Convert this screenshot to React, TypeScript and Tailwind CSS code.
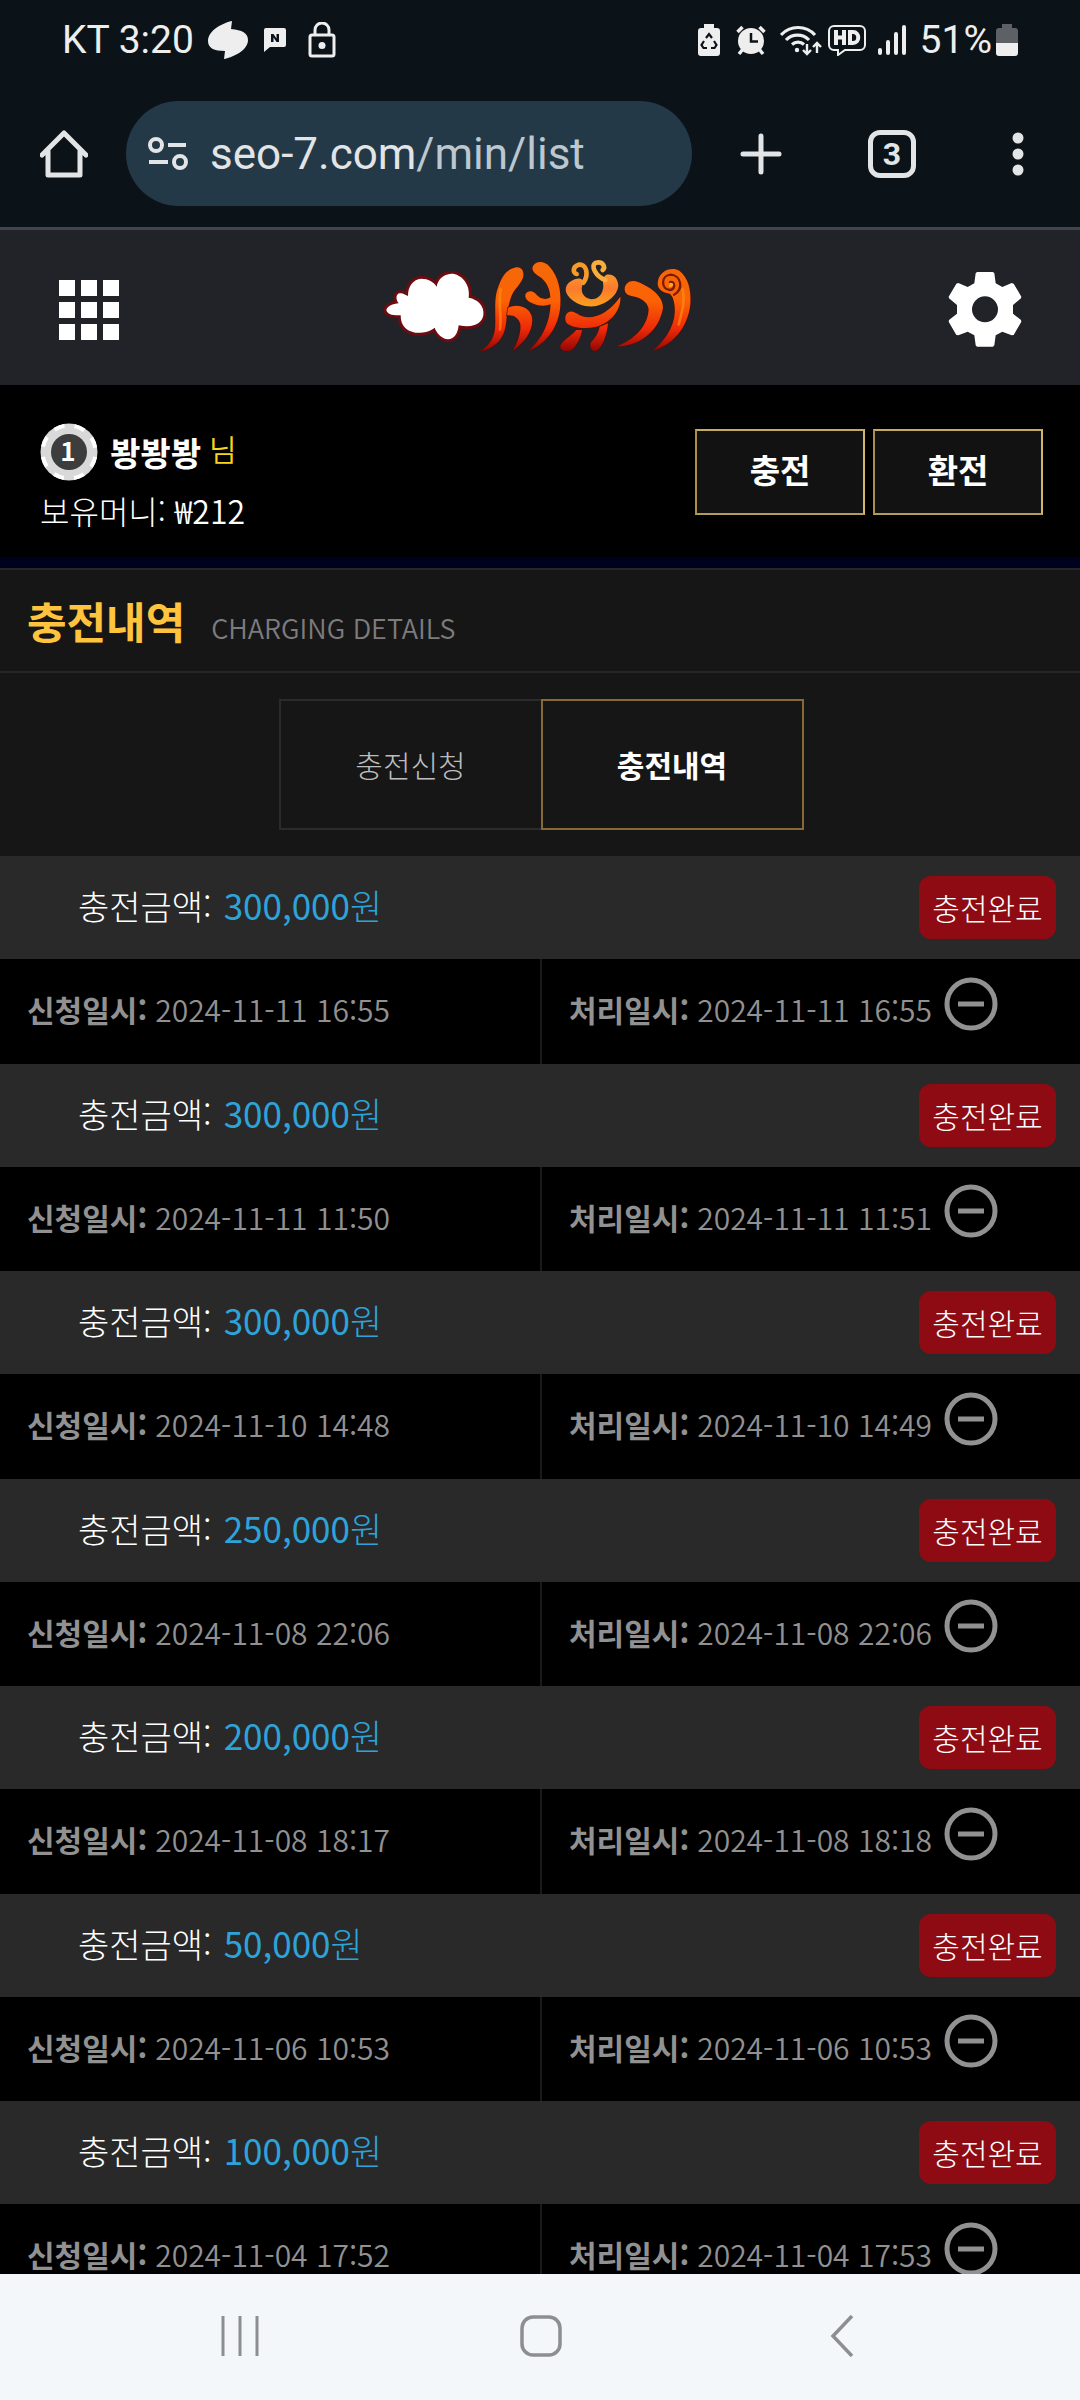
import React from "react";

const HISTORY = [
  { amount: "300,000", requested: "2024-11-11 16:55", processed: "2024-11-11 16:55" },
  { amount: "300,000", requested: "2024-11-11 11:50", processed: "2024-11-11 11:51" },
  { amount: "300,000", requested: "2024-11-10 14:48", processed: "2024-11-10 14:49" },
  { amount: "250,000", requested: "2024-11-08 22:06", processed: "2024-11-08 22:06" },
  { amount: "200,000", requested: "2024-11-08 18:17", processed: "2024-11-08 18:18" },
  { amount: "50,000", requested: "2024-11-06 10:53", processed: "2024-11-06 10:53" },
  { amount: "100,000", requested: "2024-11-04 17:52", processed: "2024-11-04 17:53" },
];

function StatusBar() {
  return (
    <div className="flex h-20 items-center justify-between px-[62px] text-[39px] leading-none text-[#eeeeee]">
      <div className="flex items-center">
        <span>KT 3:20</span>
        <svg className="ml-[14px] h-[38px] w-10" viewBox="0 0 40 38" fill="currentColor">
          <path d="M24 0C11 3 0 11 0 20c0 7 6 10 17 10l-1 8c13-3 24-10 24-19 0-7-6-10-17-11z" />
        </svg>
        <svg className="ml-4 h-6 w-[22px]" viewBox="0 0 22 24">
          <path
            d="M2 0h18a2 2 0 0 1 2 2v15a2 2 0 0 1-2 2H6l-6 5V2a2 2 0 0 1 2-2z"
            fill="currentColor"
          />
          <path d="M7 14V6h2.500l3 4.500V6H15v8h-2.500l-3-4.500V14z" fill="#0b1319" />
        </svg>
        <svg
          className="ml-[22px] h-9 w-7"
          viewBox="0 0 28 36"
          fill="none"
          stroke="currentColor"
          strokeWidth="3">
          <path d="M7 13V8a7 7 0 0 1 14 0v5" />
          <rect x="2" y="13" width="24" height="21" rx="2" />
          <circle cx="14" cy="23.500" r="3.500" fill="currentColor" stroke="none" />
        </svg>
      </div>
      <div className="flex items-center">
        <svg className="h-8 w-[22px]" viewBox="0 0 22 32">
          <path
            d="M6 0h10v4h3a3 3 0 0 1 3 3v22a3 3 0 0 1-3 3H3a3 3 0 0 1-3-3V7a3 3 0 0 1 3-3h3z"
            fill="currentColor"
          />
          <path
            d="M8 14l3-4 3 4m2 3 2.500 4-2 3H13m-4 0H5.500l-2-3L6 17"
            fill="none"
            stroke="#0b1319"
            strokeWidth="2.200"
          />
        </svg>
        <svg className="ml-4 h-8 w-[30px]" viewBox="0 0 30 32">
          <circle cx="15" cy="17" r="13" fill="currentColor" />
          <path
            d="M1.500 8l5-5M28.500 8l-5-5M3 30l4-5M27 30l-4-5"
            stroke="currentColor"
            strokeWidth="3.500"
          />
          <path d="M15 9v8.500h7" fill="none" stroke="#0b1319" strokeWidth="2.500" />
        </svg>
        <svg
          className="ml-[14px] h-8 w-[42px]"
          viewBox="0 0 42 32"
          fill="none"
          stroke="currentColor"
          strokeWidth="3.200">
          <path d="M1 11a23 23 0 0 1 34 0M6 16a16 16 0 0 1 23 0M12 20.500a9 9 0 0 1 12 0" />
          <circle cx="17" cy="26" r="2.200" fill="currentColor" stroke="none" />
          <path d="M27 20v10m-4-4 4 4 4-4M37 29V19m-4 4 4-4 4 4" strokeWidth="2.400" />
        </svg>
        <svg
          className="ml-[6px] h-8 w-[38px]"
          viewBox="0 0 38 32"
          fill="none"
          stroke="currentColor">
          <path
            d="M6 2h26a5 5 0 0 1 5 5v14a5 5 0 0 1-5 5H17l-7 5v-5H6a5 5 0 0 1-5-5V7a5 5 0 0 1 5-5z"
            strokeWidth="2"
          />
          <path d="M8 6v15M16 6v15M8 13.500h8M22 8h3c7 0 7 11 0 11h-3z" strokeWidth="4" />
        </svg>
        <svg className="ml-3 h-8 w-7" viewBox="0 0 28 32" stroke="currentColor" strokeWidth="4" strokeLinecap="round">
          <path d="M2 26v3M10 18v11M18 10v19M26 3v26" />
        </svg>
        <span className="ml-[14px]">51%</span>
        <svg className="ml-1 h-8 w-[22px]" viewBox="0 0 22 32">
          <path
            d="M6 0h10v4h3a3 3 0 0 1 3 3v12H0V7a3 3 0 0 1 3-3h3z"
            fill="#5d6165"
          />
          <path d="M0 19h22v10a3 3 0 0 1-3 3H3a3 3 0 0 1-3-3z" fill="currentColor" />
        </svg>
      </div>
    </div>
  );
}

function BrowserBar() {
  return (
    <div className="flex h-[147px] items-center pr-14 pl-10 text-[#e2e4e6]">
      <button aria-label="홈">
        <svg
          className="h-12 w-12"
          viewBox="0 0 48 48"
          fill="none"
          stroke="currentColor"
          strokeWidth="5"
          strokeLinejoin="round"
          strokeLinecap="round">
          <path d="M2 25 24 3l22 22M8 21v24h32V21" />
        </svg>
      </button>
      <button className="ml-[38px] flex h-[105px] flex-1 items-center rounded-full bg-[#233947] pl-[22px] text-[44px]">
        <svg
          className="h-9 w-10"
          viewBox="0 0 40 36"
          fill="none"
          stroke="currentColor"
          strokeWidth="4">
          <circle cx="8" cy="9" r="6" />
          <path d="M20 9h18M1 26h19" />
          <circle cx="32" cy="26" r="6" />
        </svg>
        <span className="ml-[22px]">
          seo-7.com<span className="text-[#bdc7cf]">/min/list</span>
        </span>
      </button>
      <button aria-label="새 탭" className="ml-12">
        <svg
          className="h-[42px] w-[42px]"
          viewBox="0 0 42 42"
          stroke="currentColor"
          strokeWidth="5"
          strokeLinecap="round">
          <path d="M21 3v36M3 21h36" />
        </svg>
      </button>
      <button
        aria-label="탭 3개"
        className="ml-[86px] flex h-12 w-12 items-center justify-center rounded-xl border-[5px] border-current text-[32px] leading-none font-bold">
        3
      </button>
      <button aria-label="메뉴" className="ml-[96px]">
        <svg className="h-11 w-3" viewBox="0 0 12 44" fill="currentColor">
          <circle cx="6" cy="6" r="5.500" />
          <circle cx="6" cy="22" r="5.500" />
          <circle cx="6" cy="38" r="5.500" />
        </svg>
      </button>
    </div>
  );
}

function Logo() {
  return (
    <svg className="h-[100px] w-80" viewBox="60 90 960 300" role="img" aria-label="서유기">
      <defs>
        <linearGradient id="flame" x1="0" y1="100" x2="0" y2="378" gradientUnits="userSpaceOnUse">
          <stop offset="0" stopColor="#f26a08" />
          <stop offset="0.450" stopColor="#fb6205" />
          <stop offset="0.750" stopColor="#ee2a08" />
          <stop offset="1" stopColor="#8e0505" />
        </linearGradient>
        <linearGradient id="ember" x1="0" y1="100" x2="0" y2="245" gradientUnits="userSpaceOnUse">
          <stop offset="0" stopColor="#ffb52b" />
          <stop offset="0.600" stopColor="#fb7a2c" />
          <stop offset="1" stopColor="#fba21c" />
        </linearGradient>
      </defs>
      <path
        d="M85 252C88 240 105 234 122 232C112 220 114 203 125 202C135 200 143 208 150 210C150 180 165 160 190 158C210 158 228 168 236 182C240 160 255 145 280 143C310 143 338 175 332 215C360 220 380 240 376 268C372 290 350 308 302 298C300 320 290 340 270 340C250 338 235 320 230 305C215 318 190 322 172 320C145 315 128 300 128 268C110 268 88 268 85 252Z"
        fill="#fff"
        stroke="#6b0c10"
        strokeWidth="18"
        strokeLinejoin="round"
        paintOrder="stroke"
      />
      <g fill="url(#flame)" stroke="#4a1210" strokeWidth="4" paintOrder="stroke">
        <path d="M470 125C490 120 500 135 495 155C485 180 465 190 457 220C452 240 448 250 446 270C444 320 430 362 365 377C400 355 412 330 412 290C412 240 410 210 420 185C430 155 445 130 470 125Z" />
        <path d="M450 245C475 232 512 240 521 270C530 310 500 350 465 374C480 345 490 320 487 295C483 275 465 265 447 268Z" />
        <path d="M525 120C535 103 560 105 575 122C600 150 610 190 607 240C602 300 570 350 512 375C555 335 575 290 578 235C560 242 535 240 515 228C503 220 500 212 503 203C512 190 530 195 537 208C548 220 565 222 577 214C577 190 565 165 545 152C525 140 520 130 525 120Z" />
        <path d="M625 265C635 250 650 258 665 268C700 285 750 265 787 212C790 250 760 290 715 302C680 310 640 305 625 290C620 280 622 270 625 265Z" />
        <path d="M672 312C668 335 660 350 650 362C640 378 615 380 607 365C607 345 635 335 655 312Z" />
        <path d="M750 292C748 320 735 365 715 374C700 378 695 360 698 350C712 335 722 320 725 302Z" />
        <path d="M800 190C800 170 820 160 840 168C880 185 915 210 915 245C905 310 850 360 778 361C830 340 870 300 872 250C870 225 840 212 820 210C808 208 800 200 800 190Z" />
        <path d="M900 165C905 135 940 120 965 135C990 155 1000 190 997 235C990 300 950 355 885 374C930 335 955 290 950 240C948 225 945 210 935 203C910 200 895 185 900 165Z" />
      </g>
      <path
        d="M650 160C620 172 615 195 635 215C655 235 685 245 715 240C745 232 778 210 781 180C780 155 765 142 745 146C732 155 735 165 736 180C735 205 720 220 700 220C675 217 666 195 674 175C680 162 668 152 650 160Z"
        fill="url(#ember)"
      />
      <g fill="none" strokeLinecap="round">
        <path d="M676 170C694 145 685 112 662 116C642 122 645 142 656 144" stroke="#f79a2a" strokeWidth="14" />
        <path d="M742 162C715 152 694 118 715 110C734 106 744 122 734 132" stroke="#f9ad3a" strokeWidth="14" />
        <path d="M948 206C978 190 970 148 938 146C908 148 908 190 936 192C955 188 950 164 936 168" stroke="#7c1b05" strokeWidth="7" />
        <path d="M936 180C944 178 944 174 938 174" stroke="#ffa52a" strokeWidth="7" />
        <path d="M428 190C420 230 432 270 426 310M974 190C982 230 970 265 962 295" stroke="#ff9412" strokeWidth="8" opacity="0.600" />
      </g>
    </svg>
  );
}

function SiteHeader() {
  return (
    <header className="flex h-[158px] shrink-0 items-center justify-between border-t-[3px] border-[#42454d] bg-[#222328] pt-1 pr-[58px] pl-[59px] text-white">
      <button aria-label="전체메뉴" className="grid grid-cols-3 gap-[6px]">
        {Array.from({ length: 9 }, (_, i) => (
          <span key={i} className="h-4 w-4 bg-white" />
        ))}
      </button>
      <a href="#home" className="pb-2 pl-2">
        <Logo />
      </a>
      <button aria-label="설정">
        <svg className="h-[75px] w-[74px]" viewBox="-111 -112 222 225" fill="currentColor" fillRule="evenodd">
          <path d="M-24 -112H24L28 -108L32 -78L52 -67L80 -79L86 -77L109 -38L108 -33L84 -13V13L108 32L109 37L86 77L80 78L52 67L32 78L28 108L24 112H-24L-28 108L-32 78L-52 67L-80 78L-86 77L-109 37L-108 32L-84 13V-13L-108 -33L-109 -38L-86 -77L-80 -79L-52 -67L-32 -78L-28 -108ZM0 -39A39 39 0 1 0 0 39A39 39 0 1 0 0 -39Z" />
        </svg>
      </button>
    </header>
  );
}

function LevelChip() {
  return (
    <svg className="h-[58px] w-[58px]" viewBox="0 0 58 58">
      <circle cx="29" cy="29" r="28.500" fill="#d9d9d9" />
      <circle
        cx="29"
        cy="29"
        r="26.500"
        fill="none"
        stroke="#fff"
        strokeWidth="4"
        strokeDasharray="10.400 10.400"
        strokeDashoffset="-5"
      />
      <circle cx="29" cy="29" r="18" fill="#3d3d3d" />
      <text x="28" y="38" fill="#fff" fontSize="26" fontWeight="700" textAnchor="middle">
        1
      </text>
    </svg>
  );
}

function UserPanel() {
  return (
    <section className="flex h-[183px] shrink-0 items-start justify-between border-b-[11px] border-[#00001f] bg-black pr-[37px] pl-10 text-white">
      <div className="pt-[37px]">
        <div className="flex items-center">
          <LevelChip />
          <strong className="ml-3 text-[33px] leading-[60px]">봥봥봥</strong>
          <span className="ml-2 pb-2 text-[30px] leading-none font-[350] text-[#f8d31c]">님</span>
        </div>
        <p className="text-[32px] leading-14 font-light">
          보유머니: <span className="font-[350]">₩212</span>
        </p>
      </div>
      <div className="flex gap-2 pt-11">
        {["충전", "환전"].map((label) => (
          <button
            key={label}
            className="h-[86px] w-[170px] border-2 border-t-[#c4ab62] border-r-[#d0b76c] border-b-[#b39c5a] border-l-[#a8904c] bg-[#121212] pb-1 text-[33px] font-bold">
            {label}
          </button>
        ))}
      </div>
    </section>
  );
}

function Tabs() {
  return (
    <nav className="flex justify-center bg-[#161616] pt-[26px] pb-[26px] pl-[2px]">
      <button className="h-[131px] w-[262px] border-2 border-r-0 border-[#2b2b2b] text-[30px] font-light text-[#bdbdbd]">
        충전신청
      </button>
      <button className="h-[131px] w-[263px] border-2 border-[#856a36] text-[30px] font-bold text-white">
        충전내역
      </button>
    </nav>
  );
}

function HistoryItem({ item }: { item: (typeof HISTORY)[number] }) {
  return (
    <li className="flex flex-col odd:h-[208px] even:h-[207px]">
      <div className="flex h-[103px] items-center justify-between bg-[#292929] pr-6 pl-[78px]">
        <p className="flex items-baseline gap-3 pb-1 text-[34px] font-light text-white">
          충전금액:
          <span className="text-[35px] text-[#2ea3d9]">
            <span className="font-normal">{item.amount}</span>원
          </span>
        </p>
        <span className="flex h-[63px] w-[137px] items-center justify-center rounded-xl bg-[#8f0b14] text-[30px] font-light text-white">
          충전완료
        </span>
      </div>
      <div className="grid flex-1 grid-cols-2 bg-black text-[30px] text-[#919191]">
        <p className="flex items-center gap-2 pb-1 pl-[27px]">
          <b>신청일시:</b>
          <span className="font-[350]">{item.requested}</span>
        </p>
        <p className="flex items-center gap-2 border-l-2 border-[#1a1a1a] pb-1 pl-[27px]">
          <b>처리일시:</b>
          <span className="font-[350]">{item.processed}</span>
          <button aria-label="접기" className="ml-1 pb-3">
            <svg
              className="h-[54px] w-[54px]"
              viewBox="0 0 54 54"
              fill="none"
              stroke="currentColor"
              strokeWidth="5">
              <circle cx="27" cy="27" r="24" />
              <path d="M14 27h26" />
            </svg>
          </button>
        </p>
      </div>
    </li>
  );
}

function NavigationBar() {
  return (
    <nav className="grid h-[126px] shrink-0 grid-cols-[1fr_126px_1fr] place-items-center bg-[#f4f7fa] pb-[2px] pl-[2px] text-[#8d8e90]">
      <button aria-label="최근 앱">
        <svg className="h-[42px] w-10" viewBox="0 0 40 42" stroke="currentColor" strokeWidth="3">
          <path d="M3 1v40M20 1v40M37 1v40" />
        </svg>
      </button>
      <button aria-label="홈 화면">
        <svg className="h-[42px] w-[42px]" viewBox="0 0 42 42" fill="none" stroke="currentColor" strokeWidth="3.500">
          <rect x="2" y="2" width="38" height="38" rx="11" />
        </svg>
      </button>
      <button aria-label="뒤로">
        <svg className="h-[42px] w-6" viewBox="0 0 24 42" fill="none" stroke="currentColor" strokeWidth="3.500">
          <path d="M22 1 3 21l19 20" />
        </svg>
      </button>
    </nav>
  );
}

export default function App() {
  return (
    <div lang="ko" className="flex h-screen flex-col bg-black font-['Noto_Sans_CJK_KR',sans-serif]">
      <div className="shrink-0 bg-[#0b1319] font-[Roboto,'Noto_Sans_CJK_KR',sans-serif]">
        <StatusBar />
        <BrowserBar />
      </div>
      <SiteHeader />
      <main className="min-h-0 flex-1 overflow-y-auto [scrollbar-width:none]">
        <UserPanel />
        <div className="flex h-[105px] items-baseline gap-[26px] border-y-2 border-[#26262a] bg-[#161616] pl-[27px] leading-[101px]">
          <h1 className="text-[43px] font-bold text-[#ffc33e]">충전내역</h1>
          <span className="text-[27px] font-[350] text-[#7d7b7c]">CHARGING DETAILS</span>
        </div>
        <Tabs />
        <ul>
          {HISTORY.map((item) => (
            <HistoryItem key={item.requested} item={item} />
          ))}
        </ul>
      </main>
      <NavigationBar />
    </div>
  );
}
